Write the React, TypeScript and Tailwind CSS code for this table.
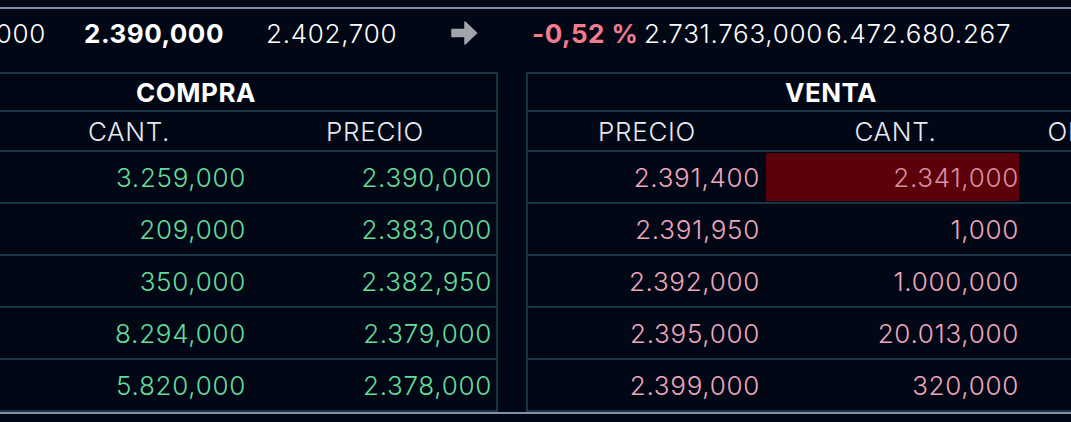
import React from 'react';

const compra = [
  { ord: '3', cant: '3.259,000', precio: '2.390,000' },
  { ord: '1', cant: '209,000', precio: '2.383,000' },
  { ord: '1', cant: '350,000', precio: '2.382,950' },
  { ord: '4', cant: '8.294,000', precio: '2.379,000' },
  { ord: '2', cant: '5.820,000', precio: '2.378,000' },
];

const venta = [
  { precio: '2.391,400', cant: '2.341,000', ord: '2', hot: true },
  { precio: '2.391,950', cant: '1,000', ord: '1', hot: false },
  { precio: '2.392,000', cant: '1.000,000', ord: '1', hot: false },
  { precio: '2.395,000', cant: '20.013,000', ord: '5', hot: false },
  { precio: '2.399,000', cant: '320,000', ord: '1', hot: false },
];

const num = "text-[26px] font-light tracking-[0.7px] whitespace-nowrap";
const bold = "text-[26px] font-bold tracking-[0.5px] whitespace-nowrap";

const Arrow = () => (
  <svg viewBox="0 0 28 28" className="w-[28px] h-[28px]">
    <path
      d="M2 10.5h13V3L26.5 14 15 25v-7.5H2z"
      fill="#a2a6ac"
      stroke="#a2a6ac"
      strokeWidth="1.5"
      strokeLinejoin="round"
    />
  </svg>
);

const App: React.FC = () => {
  return (
    <div className="w-[1071px] h-[422px] overflow-hidden bg-[#020716] text-white font-['Inter',sans-serif]">
      <div className="h-[7px]" />
      <div className="h-[2px] bg-[#7e90a8]" />

      {/* ticker bar */}
      <div className="h-[48px] flex items-center">
        <div className="w-[84px] shrink-0 flex justify-end pr-[38px]">
          <span className={num}>2.395,000</span>
        </div>
        <div className="w-[182px] shrink-0">
          <span className={bold}>2.390,000</span>
        </div>
        <div className="w-[184px] shrink-0">
          <span className={num}>2.402,700</span>
        </div>
        <div className="w-[82px] shrink-0 flex items-center">
          <Arrow />
        </div>
        <div className="w-[112px] shrink-0">
          <span className={bold + " text-[#f27b90]"}>-0,52 %</span>
        </div>
        <div className="w-[182px] shrink-0">
          <span className={num}>2.731.763,000</span>
        </div>
        <div className="shrink-0">
          <span className={num}>6.472.680.267</span>
        </div>
      </div>

      {/* order book */}
      <div className="mt-[15px] ml-[-106px] flex gap-[28px]">
        {/* compra */}
        <div className="w-[604px] shrink-0 border-x-2 border-t-2 border-[#1a3547]">
          <div className="h-[38px] border-b-2 border-[#1a3547] flex items-center justify-center">
            <span className={bold}>COMPRA</span>
          </div>
          <div className="h-[40px] border-b-2 border-[#1a3547] grid grid-cols-[110px_246px_246px] items-center text-center text-[#e8eaee]">
            <span className={num}>ORD.</span>
            <span className={num}>CANT.</span>
            <span className={num}>PRECIO</span>
          </div>
          {compra.map((r, i) => (
            <div key={i} className="h-[52px] border-b-2 border-[#1a3547] grid grid-cols-[110px_246px_246px] items-center text-right text-[#62dc9b]">
              <span className={num + " pr-[6px]"}>{r.ord}</span>
              <span className={num + " pr-[6px]"}>{r.cant}</span>
              <span className={num + " pr-[6px]"}>{r.precio}</span>
            </div>
          ))}
        </div>

        {/* venta */}
        <div className="w-[610px] shrink-0 border-x-2 border-t-2 border-[#1a3547]">
          <div className="h-[38px] border-b-2 border-[#1a3547] flex items-center justify-center">
            <span className={bold}>VENTA</span>
          </div>
          <div className="h-[40px] border-b-2 border-[#1a3547] grid grid-cols-[238px_259px_109px] items-center text-center text-[#e8eaee]">
            <span className={num}>PRECIO</span>
            <span className={num}>CANT.</span>
            <span className={num}>ORD.</span>
          </div>
          {venta.map((r, i) => (
            <div key={i} className="h-[52px] border-b-2 border-[#1a3547] grid grid-cols-[238px_259px_109px] text-[#eea6bd]">
              <div className="flex items-center justify-end pr-[6px]">
                <span className={num}>{r.precio}</span>
              </div>
              <div className="flex pr-[6px] py-[1px]">
                <div className={"flex-1 flex items-center justify-end " + (r.hot ? "bg-[#5c0009] text-[#d98fa3]" : "")}>
                  <span className={num}>{r.cant}</span>
                </div>
              </div>
              <div className="flex items-center justify-end pr-[6px]">
                <span className={num}>{r.ord}</span>
              </div>
            </div>
          ))}
        </div>
      </div>

      <div className="h-[2px] bg-[#7e90a8]" />
    </div>
  );
};

export default App;
